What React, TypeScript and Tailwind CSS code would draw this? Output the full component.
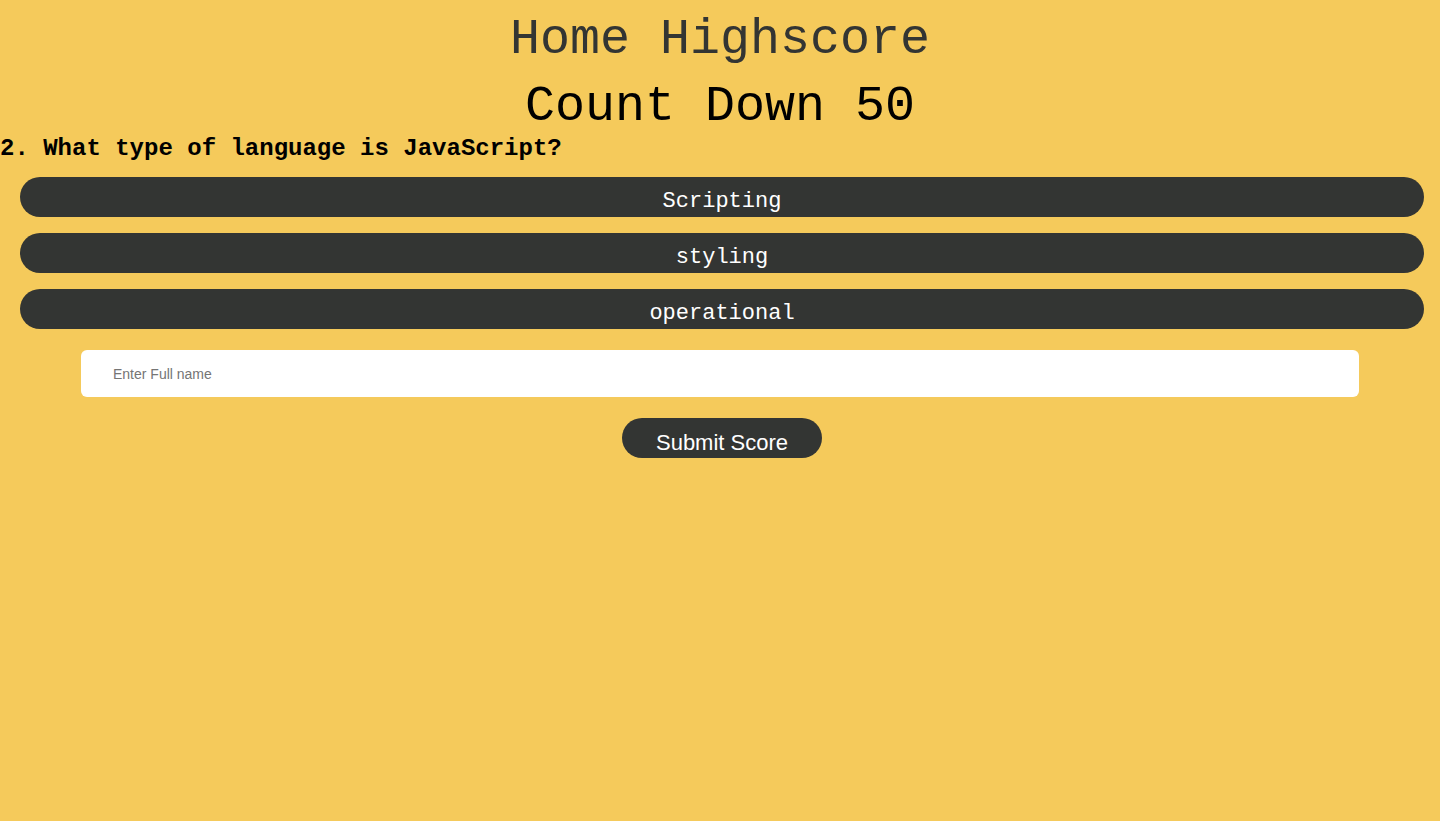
import { useState } from "react";

const answers = ["Scripting", "styling", "operational"];

export default function App() {
  const [name, setName] = useState("");

  return (
    <main className="min-h-[821px] bg-[#f5ca5b] font-['Liberation_Mono','Courier_New',monospace]">
      <header className="flex flex-col items-center">
        <h1 className="mt-[14px] text-[50px] leading-[52px] text-[#333533]">Home Highscore</h1>
        <h2 className="mt-[15px] text-[50px] leading-[52px] text-black">Count Down 50</h2>
      </header>

      <section>
        <h3 className="mt-[2px] text-[24px] font-bold leading-[28px] text-black">
          2. What type of language is JavaScript?
        </h3>
        <div className="mt-[14px] flex flex-col gap-[16px] pl-[20px]">
          {answers.map((a) => (
            <button
              key={a}
              type="button"
              className="h-[40px] w-[1404px] rounded-full bg-[#333533] pt-[10px] text-[22px] leading-[28px] text-white"
            >
              {a}
            </button>
          ))}
        </div>
      </section>

      <form className="mt-[21px] flex flex-col items-center" onSubmit={(e) => e.preventDefault()}>
        <input
          value={name}
          onChange={(e) => setName(e.target.value)}
          placeholder="Enter Full name"
          className="h-[47px] w-[1278px] rounded-[6px] bg-white px-[32px] font-['Liberation_Sans',Arial,sans-serif] text-[14px] text-black placeholder:text-[#757575] outline-none"
        />
        <button
          type="submit"
          className="ml-[4px] mt-[21px] h-[40px] w-[200px] rounded-full bg-[#333533] pt-[9px] font-['Liberation_Sans',Arial,sans-serif] text-[22px] leading-[26px] text-white"
        >
          Submit Score
        </button>
      </form>
    </main>
  );
}
